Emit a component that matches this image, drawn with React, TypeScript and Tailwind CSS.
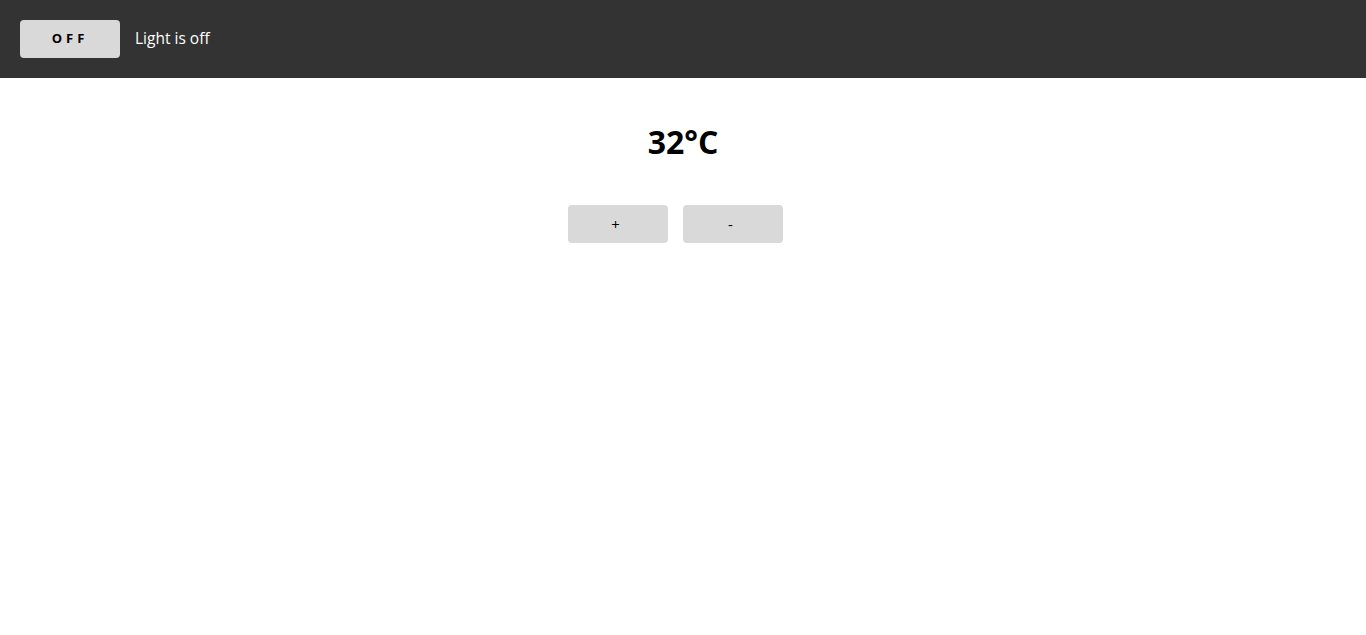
export default function App() {
  return (
    <div className="min-h-screen bg-white" style={{ fontFamily: '"Segoe UI", "Open Sans", "Noto Sans", sans-serif' }}>
      <div className="flex h-[78px] items-center bg-[#333333] pl-5">
        <button className="h-[38px] w-[100px] rounded-[4px] bg-[#d9d9d9] text-[13px] font-bold tracking-[4px] text-black">
          OFF
        </button>
        <span className="ml-[15px] text-[15.5px] text-white">Light is off</span>
      </div>
      <div className="flex flex-col items-center">
        <div className="mt-[42px] h-[44px] text-[32px] font-bold leading-[44px] text-black">32°C</div>
        <div className="mt-[41px] flex">
          <button className="mr-[15px] h-[38px] w-[100px] rounded-[4px] bg-[#d9d9d9] pr-[5px] text-[15px] text-black">+</button>
          <button className="mr-[15px] h-[38px] w-[100px] rounded-[4px] bg-[#d9d9d9] pr-[5px] text-[15px] text-black">-</button>
        </div>
      </div>
    </div>
  );
}
